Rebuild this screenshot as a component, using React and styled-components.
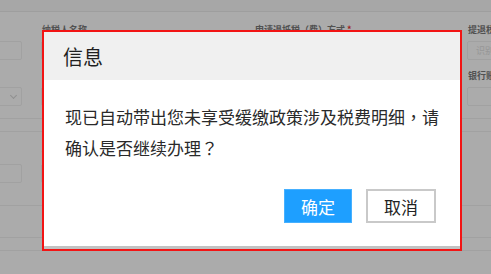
import React from 'react'
import styled, { createGlobalStyle } from 'styled-components'

const GlobalStyle = createGlobalStyle`
  html, body {
    margin: 0;
    padding: 0;
    background: #fff;
  }
  body {
    font-family: "Noto Sans CJK SC", "Noto Sans", sans-serif;
  }
`

const Page = styled.div`
  position: relative;
  width: 491px;
  height: 274px;
  overflow: hidden;
  background: #fff;
`

const TopBar = styled.div`
  height: 11px;
  background: #f9f9f9;
  border-bottom: 1px solid #ececec;
`

const Form = styled.div`
  display: grid;
  grid-template-columns: repeat(4, 213px);
  margin-left: -172px;
  padding-top: 12px;
  row-gap: 10px;
`

const Field = styled.div`
  display: flex;
  flex-direction: column;
  gap: 6px;
  overflow: hidden;
`

const Label = styled.div`
  font-size: 9px;
  line-height: 11px;
  height: 11px;
  color: #7a7a7a;
  font-weight: 700;
  white-space: nowrap;
  padding-left: 1px;

  em {
    color: #e33;
    font-style: normal;
    margin-left: 2px;
  }
`

const Input = styled.div`
  position: relative;
  box-sizing: border-box;
  width: 194px;
  height: 19px;
  border: 1px solid #f0f0f0;
  border-radius: 2px;
  background: #fff;
  font-size: 9px;
  line-height: 17px;
  color: #e2e2e2;
  padding-left: 8px;
`

const Chevron = styled.span`
  position: absolute;
  right: 5px;
  top: 5px;
  width: 4px;
  height: 4px;
  border-right: 1px solid #d6d6d6;
  border-bottom: 1px solid #d6d6d6;
  transform: rotate(45deg);
`

const Divider = styled.div`
  height: ${p => p.h}px;
  border-bottom: 1px solid #f0f0f0;
`

const Section = styled.div`
  display: grid;
  grid-template-columns: repeat(4, 213px);
  margin-left: -172px;
  padding-top: 15px;
`

const Overlay = styled.div`
  position: absolute;
  inset: 0;
  background: rgba(0, 0, 0, 0.33);
`

const Highlight = styled.div`
  position: absolute;
  left: 42px;
  top: 30px;
  width: 416px;
  border: 2px solid #f21414;
  background: #c2c2c2;
  padding-bottom: 3px;
`

const Dialog = styled.div`
  background: #fff;
  display: flex;
  flex-direction: column;
`

const Header = styled.div`
  height: 48px;
  background: #f0f0f0;
  display: flex;
  align-items: center;
  padding-left: 19px;
  font-size: 20px;
  color: #1f1f1f;
`

const Body = styled.div`
  padding: 21px 16px 0 21px;
  font-size: 17px;
  line-height: 31px;
  color: #2a2a2a;
`

const Punct = styled.span`
  font-family: "Noto Sans CJK TC", "Noto Sans CJK SC", sans-serif;
`

const Actions = styled.div`
  display: flex;
  justify-content: flex-end;
  gap: 14px;
  padding: 26px 24px 23px 0;
`

const Button = styled.button`
  box-sizing: border-box;
  height: 34px;
  width: ${p => (p.primary ? 68 : 70)}px;
  padding: 0;
  font-family: inherit;
  font-size: 17px;
  border-radius: 0;
  cursor: pointer;
  border: ${p => (p.primary ? '1px solid #46b0ff' : '2px solid #c9c9c9')};
  background: ${p => (p.primary ? '#1e9fff' : '#fff')};
  color: ${p => (p.primary ? '#fff' : '#222')};
`

export default function App() {
  return (
    <>
      <GlobalStyle />
      <Page>
        <TopBar />
        <Form>
          <Field>
            <Label>纳税人识别号</Label>
            <Input />
          </Field>
          <Field>
            <Label>纳税人名称</Label>
            <Input />
          </Field>
          <Field>
            <Label>申请退抵税（费）方式<em>*</em></Label>
            <Input />
          </Field>
          <Field>
            <Label>提退税额</Label>
            <Input>识别</Input>
          </Field>
          <Field>
            <Label>退税方式</Label>
            <Input><Chevron /></Input>
          </Field>
          <Field>
            <Label>d</Label>
            <Input />
          </Field>
          <Field>
            <Label>开户银行</Label>
            <Input />
          </Field>
          <Field>
            <Label>银行账号</Label>
            <Input />
          </Field>
        </Form>
        <Divider h={12} />
        <Divider h={12} />
        <Section>
          <Field>
            <Label>备注</Label>
            <Input />
          </Field>
          <Field>
            <Label>说明</Label>
            <Input />
          </Field>
        </Section>
        <Divider h={22} />
        <Divider h={31} />
        <Divider h={12} />
        <Overlay />
        <Highlight>
          <Dialog>
            <Header>信息</Header>
            <Body>
              现已自动带出您未享受缓缴政策涉及税费明细<Punct>，</Punct>请确认是否继续办理<Punct>？</Punct>
            </Body>
            <Actions>
              <Button primary>确定</Button>
              <Button>取消</Button>
            </Actions>
          </Dialog>
        </Highlight>
      </Page>
    </>
  )
}
